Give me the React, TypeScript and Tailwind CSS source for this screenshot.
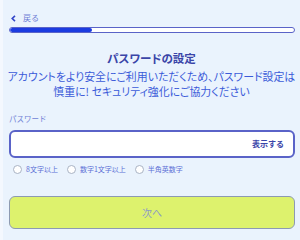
import React from 'react'

const Check = ({label}: {label: string}) => (
  <div className="flex items-center gap-[4px]">
    <span className="w-[9px] h-[9px] rounded-full border border-[#a9b3c4] bg-white" />
    <span className="text-[7px] leading-none text-[#5b6fd6]">{label}</span>
  </div>
)

const App = () => {
  return (
    <div
      className="w-[300px] h-[240px] bg-[#eaf3fd] overflow-hidden border-l-[3px] border-[#f4f8fe]"
      style={{fontFamily: '"Noto Sans CJK JP", "Noto Sans", sans-serif'}}
    >
      <div className="pl-[6px] pr-[2px] pt-[13px]">
        <div className="flex items-center gap-[7px] text-[8px] leading-none text-[#6f7fd6] h-[10px] pl-[2px]">
          <svg width="5" height="7" viewBox="0 0 5 7">
            <path d="M4 0.8 L1.2 3.5 L4 6.2" fill="none" stroke="#3346c8" strokeWidth="1.6" />
          </svg>
          <span>戻る</span>
        </div>
        <div className="mt-[4px] h-[6px] w-[286px] rounded-full border border-[#5a63c8] bg-white overflow-hidden">
          <div className="h-full w-[82px] bg-[#1b3be0] rounded-full" />
        </div>
      </div>

      <div className="mt-[20px] text-center text-[11.5px] font-bold leading-none text-[#3a45a8] [font-feature-settings:'palt']">
        パスワードの設定
      </div>
      <div className="mt-[4px] text-center text-[10.9px] leading-[15px] text-[#3b5bd9] [font-feature-settings:'palt'] whitespace-nowrap">
        アカウントをより安全にご利用いただくため、パスワード設定は
        <br />
        慎重に! セキュリティ強化にご協力ください
      </div>

      <div className="pl-[6px] pr-[2px] mt-[16px]">
        <div className="text-[7.5px] leading-none text-[#6f7fd6]">パスワード</div>
        <div className="mt-[8px] h-[28px] w-[286px] rounded-[6px] border-2 border-[#5a63c8] bg-white flex items-center justify-end pr-[9px]">
          <span className="text-[8px] font-bold text-[#3a45a8]">表示する</span>
        </div>
        <div className="mt-[7px] flex items-center gap-[9px] pl-[4px]">
          <Check label="8文字以上" />
          <Check label="数字1文字以上" />
          <Check label="半角英数字" />
        </div>
        <div className="mt-[22px] h-[33px] w-[286px] rounded-[6px] border-[1.5px] border-[#8d9ab2] bg-[#ddf26d] flex items-center justify-center">
          <span className="text-[10px] text-[#8e9cc4]">次へ</span>
        </div>
      </div>
    </div>
  )
}

export default App
